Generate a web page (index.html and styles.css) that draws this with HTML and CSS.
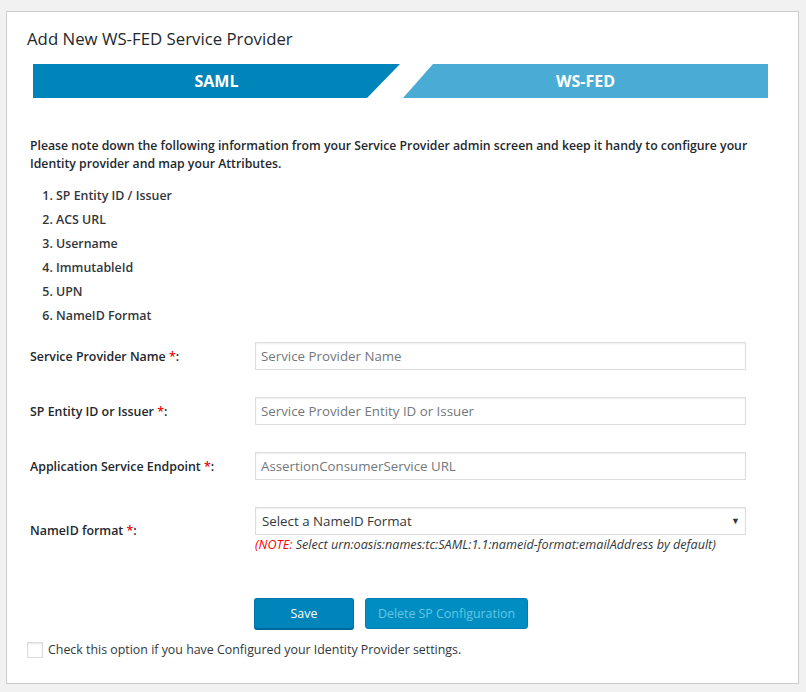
FILE: index.html
```html
<!DOCTYPE html>
<html lang="en">
<head>
<meta charset="utf-8">
<title>Add New WS-FED Service Provider</title>
<link rel="stylesheet" href="styles.css">
</head>
<body>
<div class="card">
  <h3 class="title">Add New WS-FED Service Provider</h3>
  <div class="tabs">
    <div class="tab tab-saml">SAML</div>
    <div class="tab tab-wsfed">WS-FED</div>
  </div>
  <p class="intro">Please note down the following information from your Service Provider admin screen and keep it handy to configure your Identity provider and map your Attributes.</p>
  <ol class="info-list">
    <li>SP Entity ID / Issuer</li>
    <li>ACS URL</li>
    <li>Username</li>
    <li>ImmutableId</li>
    <li>UPN</li>
    <li>NameID Format</li>
  </ol>
  <form class="form">
    <div class="row">
      <label class="label">Service Provider Name <span class="req">*</span>:</label>
      <div class="field"><input class="input" type="text" placeholder="Service Provider Name"></div>
    </div>
    <div class="row">
      <label class="label">SP Entity ID or Issuer <span class="req">*</span>:</label>
      <div class="field"><input class="input" type="text" placeholder="Service Provider Entity ID or Issuer"></div>
    </div>
    <div class="row">
      <label class="label">Application Service Endpoint <span class="req">*</span>:</label>
      <div class="field"><input class="input" type="text" placeholder="AssertionConsumerService URL"></div>
    </div>
    <div class="row">
      <label class="label">NameID format <span class="req">*</span>:</label>
      <div class="field">
        <div class="select-wrap">
          <select class="select"><option>Select a NameID Format</option></select>
          <span class="arrow">&#9660;</span>
        </div>
        <div class="note"><span class="note-red">(NOTE:</span> Select urn:oasis:names:tc:SAML:1.1:nameid-format:emailAddress by default)</div>
      </div>
    </div>
    <div class="buttons">
      <button type="button" class="btn btn-primary">Save</button>
      <button type="button" class="btn btn-disabled">Delete SP Configuration</button>
    </div>
    <label class="check-row"><span class="checkbox"></span><span class="check-text">Check this option if you have Configured your Identity Provider settings.</span></label>
  </form>
</div>
</body>
</html>
```
FILE: styles.css
```css
html, body {
  margin: 0;
  padding: 0;
  background: #f1f1f1;
}
body {
  font-family: "Open Sans", "Noto Sans", sans-serif;
  color: #23282d;
  font-size: 13px;
  padding: 11px 7px 8px 6px;
}
.card {
  background: #fff;
  border: 1px solid #ccc;
  padding: 15px 20px 25px 20px;
}
.title {
  margin: 0 0 13px 0;
  font-size: 16.8px;
  font-weight: 500;
  line-height: 24px;
  color: #23282d;
}
.tabs {
  display: flex;
  gap: 3px;
  margin-left: 6px;
  height: 34px;
}
.tab {
  color: #fff;
  font-size: 16px;
  font-weight: 700;
  display: flex;
  align-items: center;
  justify-content: center;
}
.tab-saml {
  width: 367px;
  background: #0085ba;
  clip-path: polygon(0 0, 100% 0, calc(100% - 33px) 100%, 0 100%);
}
.tab-wsfed {
  width: 365px;
  background: #4aacd5;
  clip-path: polygon(30px 0, 100% 0, 100% 100%, 0 100%);
}
.intro {
  margin: 39px 0 0 3px;
  font-weight: 600;
  line-height: 18px;
  font-size: 12.25px;
  color: #23282d;
}
.info-list {
  margin: 11px 0 0 3px;
  padding-left: 26px;
  font-weight: 600;
  font-size: 12.4px;
  line-height: 24px;
  color: #32373c;
}
.form {
  margin: 14px 0 0 0;
}
.row {
  display: flex;
  align-items: center;
  margin-bottom: 27px;
}
.label {
  width: 228px;
  padding-left: 3px;
  box-sizing: border-box;
  font-weight: 600;
  font-size: 12.4px;
  color: #23282d;
}
.req {
  color: #e00;
}
.field {
  width: 491px;
}
.input {
  display: block;
  width: 100%;
  box-sizing: border-box;
  height: 28px;
  border: 1px solid #ddd;
  box-shadow: inset 0 1px 2px rgba(0,0,0,0.07);
  padding: 0 5px;
  font-family: inherit;
  font-size: 13.3px;
  color: #32373c;
  outline: none;
}
.input::placeholder {
  color: #72777c;
}
.select-wrap {
  position: relative;
}
.select {
  display: block;
  width: 100%;
  height: 28px;
  box-sizing: border-box;
  border: 1px solid #ddd;
  box-shadow: inset 0 1px 2px rgba(0,0,0,0.07);
  background: #fff;
  padding: 0 6px;
  font-family: inherit;
  font-size: 13.3px;
  color: #32373c;
  appearance: none;
  -webkit-appearance: none;
  border-radius: 0;
}
.arrow {
  position: absolute;
  right: 6px;
  top: 7px;
  font-size: 9px;
  color: #32373c;
  pointer-events: none;
}
.note {
  margin-top: 1px;
  font-style: italic;
  font-size: 12.6px;
  line-height: 18px;
  color: #32373c;
  white-space: nowrap;
}
.note-red {
  color: #f00;
}
.buttons {
  display: flex;
  gap: 11px;
  margin: 44px 0 0 227px;
}
.btn {
  height: 31px;
  border-radius: 3px;
  font-family: inherit;
  font-size: 12.4px;
  padding: 0;
  box-sizing: border-box;
  cursor: pointer;
  white-space: nowrap;
}
.btn-primary {
  width: 100px;
  background: #0085ba;
  border: 1px solid #0073aa;
  border-bottom-color: #006799;
  box-shadow: 0 1px 0 #006799;
  color: #fff;
}
.btn-disabled {
  width: 163px;
  background: #008ec2;
  border: 1px solid #007cb2;
  color: #66c6e4;
}
.check-row {
  display: flex;
  align-items: center;
  margin-top: 12px;
  gap: 5px;
}
.checkbox {
  width: 16px;
  height: 16px;
  box-sizing: border-box;
  border: 1px solid #ddd;
  box-shadow: inset 0 1px 2px rgba(0,0,0,0.1);
  background: #fff;
}
.check-text {
  font-size: 12.4px;
  color: #32373c;
}
```
